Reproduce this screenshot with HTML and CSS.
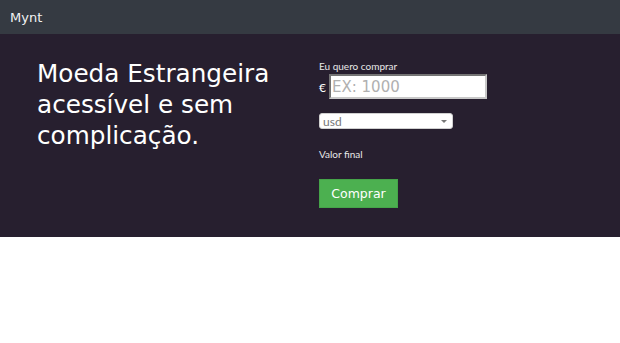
FILE: index.html
```html
<!DOCTYPE html>
<html>
<head>
    <meta name="viewport" content="width=device-width, initial-scale=1">
    <link rel="stylesheet" href="styles.css">
</head>
<body>
    <nav class="navbar">
        <span class="brand">Mynt</span>
    </nav>
    <div class="hero">
        <div class="hero-text">
            <h1>Moeda Estrangeira acessível e sem complicação.</h1>
        </div>
        <form class="buy-form">
            <label class="small-label">Eu quero comprar</label>
            <div class="amount-row">
                <span class="currency">€</span>
                <input type="text" class="amount" placeholder="EX: 1000">
            </div>
            <div class="select-box">
                <span>usd</span>
                <span class="arrow"></span>
            </div>
            <label class="small-label final">Valor final</label>
            <button type="button" class="buy-button">Comprar</button>
        </form>
    </div>
</body>
</html>
```

FILE: styles.css
```css
body {
    margin: 0;
    font-family: "DejaVu Sans", sans-serif;
    background-color: white;
}

.navbar {
    height: 34px;
    background-color: #353a42;
    display: flex;
    align-items: center;
    padding-left: 10px;
}

.brand {
    color: #f2f2f2;
    font-size: 13px;
}

.hero {
    background-color: #271f2f;
    height: 203px;
    display: flex;
    color: white;
}

.hero-text {
    width: 282px;
    padding-left: 37px;
    padding-top: 24px;
}

.hero-text h1 {
    margin: 0;
    font-weight: normal;
    font-size: 24.7px;
    line-height: 31px;
    width: 245px;
}

.buy-form {
    display: flex;
    flex-direction: column;
    align-items: flex-start;
    padding-top: 26px;
}

.small-label {
    font-family: "Lato", sans-serif;
    font-size: 10px;
    color: #e8e8e8;
}

.amount-row {
    display: flex;
    align-items: center;
    margin-top: 2px;
}

.currency {
    font-family: "Lato", sans-serif;
    font-size: 12px;
    width: 10px;
    margin-top: 2px;
}

.amount {
    width: 152px;
    height: 21px;
    box-sizing: content-box;
    border: 2px inset #c8c8c8;
    padding: 0 1px;
    font-family: "DejaVu Sans", sans-serif;
    font-size: 15px;
    background: white;
}

.amount::placeholder {
    color: #b0b0b0;
}

.select-box {
    margin-top: 14px;
    width: 124px;
    height: 14px;
    background: white;
    border: 1px solid #d0d0d0;
    border-radius: 3px;
    display: flex;
    align-items: center;
    justify-content: space-between;
    padding: 0 5px 0 3px;
    box-sizing: content-box;
    font-family: "Lato", sans-serif;
    font-size: 12px;
    color: #777;
}

.arrow {
    width: 0;
    height: 0;
    border-left: 3px solid transparent;
    border-right: 3px solid transparent;
    border-top: 3px solid #777;
}

.final {
    margin-top: 19px;
}

.buy-button {
    margin-top: 19px;
    width: 79px;
    height: 29px;
    background-color: #4cb050;
    border: 1px solid #45a449;
    color: white;
    font-family: "DejaVu Sans", sans-serif;
    font-size: 12.5px;
    padding: 0;
}
```
